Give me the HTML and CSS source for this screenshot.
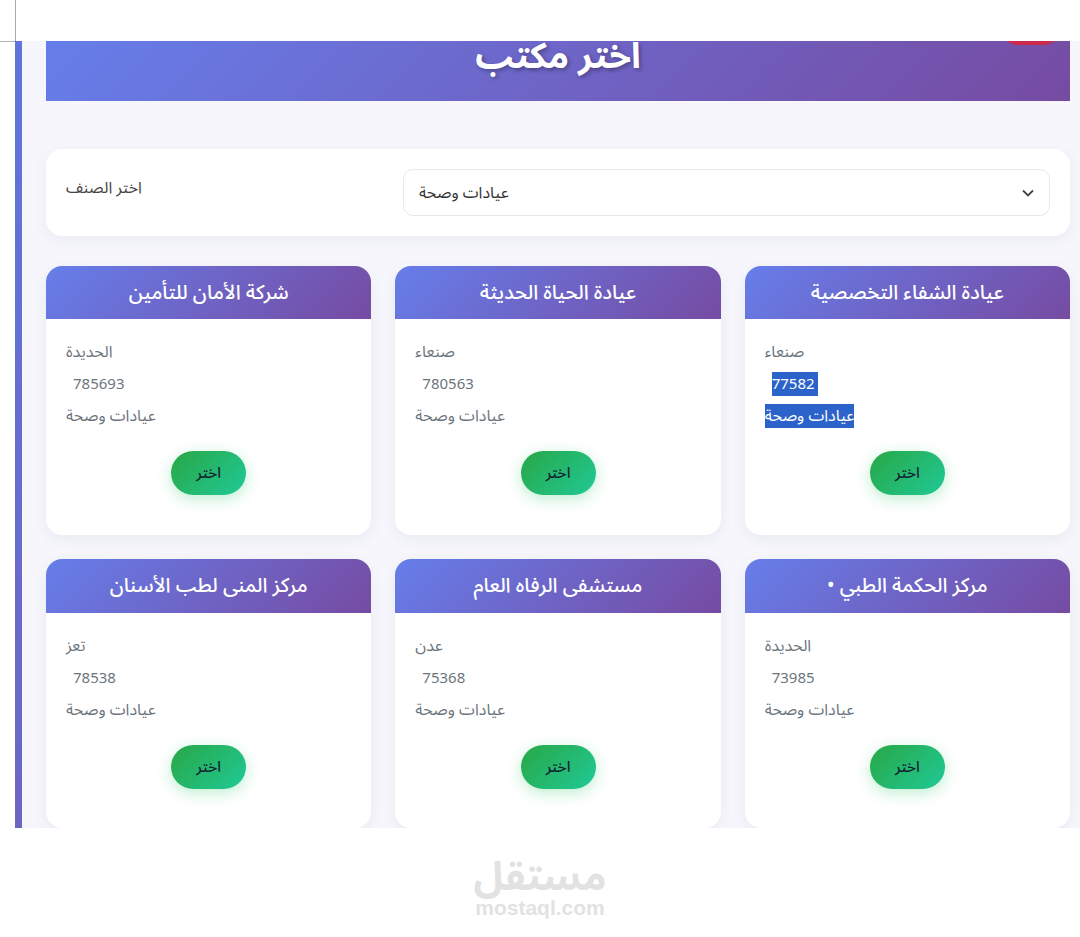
FILE: index.html
```html
<!DOCTYPE html>
<html lang="ar">
<head>
<meta charset="utf-8">
<title>اختر مكتب</title>
<link rel="stylesheet" href="styles.css">
</head>
<body>
<div class="topbar"><div class="corner"></div></div>
<main class="stage">
  <div class="content">
    <header class="hero">
      <h1>اختر مكتب</h1>
      <span class="badge"></span>
    </header>
    <section class="filter">
      <label class="filter-label">اختر الصنف</label>
      <div class="select">
        <span>عيادات وصحة</span>
        <svg class="chev" width="14" height="14" viewBox="0 0 14 14"><path d="M2 4.5 7 9.5 12 4.5" fill="none" stroke="#444" stroke-width="1.8"/></svg>
      </div>
    </section>
    <section class="grid">
      <article class="card">
        <h2>عيادة الشفاء التخصصية</h2>
        <div class="body">
          <p>صنعاء</p>
          <p class="num"><span class="sel">77582&nbsp;</span></p>
          <p><span class="sel">عيادات وصحة</span></p>
          <button class="pick">اختر</button>
        </div>
      </article>
      <article class="card">
        <h2>عيادة الحياة الحديثة</h2>
        <div class="body">
          <p>صنعاء</p>
          <p class="num">780563</p>
          <p>عيادات وصحة</p>
          <button class="pick">اختر</button>
        </div>
      </article>
      <article class="card">
        <h2>شركة الأمان للتأمين</h2>
        <div class="body">
          <p>الحديدة</p>
          <p class="num">785693</p>
          <p>عيادات وصحة</p>
          <button class="pick">اختر</button>
        </div>
      </article>
      <article class="card">
        <h2>مركز الحكمة الطبي •</h2>
        <div class="body">
          <p>الحديدة</p>
          <p class="num">73985</p>
          <p>عيادات وصحة</p>
          <button class="pick">اختر</button>
        </div>
      </article>
      <article class="card">
        <h2>مستشفى الرفاه العام</h2>
        <div class="body">
          <p>عدن</p>
          <p class="num">75368</p>
          <p>عيادات وصحة</p>
          <button class="pick">اختر</button>
        </div>
      </article>
      <article class="card">
        <h2>مركز المنى لطب الأسنان</h2>
        <div class="body">
          <p>تعز</p>
          <p class="num">78538</p>
          <p>عيادات وصحة</p>
          <button class="pick">اختر</button>
        </div>
      </article>
    </section>
  </div>
</main>
<footer class="mark">
  <div class="mark-ar">مستقل</div>
  <div class="mark-en">mostaql.com</div>
</footer>
</body>
</html>
```
FILE: styles.css
```css
* { box-sizing: border-box; }
html, body { margin: 0; padding: 0; }
body {
  width: 1080px;
  height: 937px;
  overflow: hidden;
  background: #fff;
  font-family: "Noto Sans Arabic", "Noto Sans", "DejaVu Sans", sans-serif;
}
.topbar { height: 41px; }
.corner {
  width: 16px;
  height: 42px;
  border-right: 1px solid #a8a8a8;
  border-bottom: 1px solid #b4b4b4;
}
.stage {
  height: 787px;
  margin-left: 15px;
  border-left: 7px solid #6269c8;
  border-image: linear-gradient(180deg, #5f75dc, #6c66c2) 1;
  background: #f6f6fc;
  overflow: hidden;
}
.content { padding: 0 10px 0 24px; }
.hero {
  position: relative;
  height: 60px;
  overflow: hidden;
  background: linear-gradient(135deg, #667eea, #764ba2);
  display: flex;
  justify-content: center;
}
.hero h1 {
  margin: -12px 0 0;
  color: #fff;
  font-size: 35.5px;
  line-height: 56px;
  font-weight: 700;
  text-shadow: 2px 2px 4px rgba(0, 0, 0, .3);
}
.badge {
  position: absolute;
  top: -40px;
  right: 7px;
  width: 64px;
  height: 44px;
  border-radius: 20px;
  background: #cc2a4a;
}
.filter {
  margin-top: 48px;
  height: 87px;
  padding: 20px;
  background: #fff;
  border-radius: 16px;
  box-shadow: 0 4px 14px rgba(90, 90, 140, .07);
  display: flex;
  justify-content: space-between;
  align-items: flex-start;
}
.filter-label {
  font-size: 16px;
  line-height: 38px;
  color: #444;
  direction: rtl;
}
.select {
  width: 647px;
  height: 47px;
  padding: 0 14px 0 15px;
  border: 1.5px solid #e8e8ee;
  border-radius: 10px;
  background: #fff;
  display: flex;
  justify-content: space-between;
  align-items: center;
  font-size: 16px;
  color: #333;
  direction: rtl;
  flex-direction: row-reverse;
}
.grid {
  margin-top: 29.6px;
  direction: rtl;
  display: grid;
  grid-template-columns: repeat(3, 1fr);
  gap: 24.6px 24px;
}
.card {
  height: 269px;
  background: #fff;
  border-radius: 16px;
  overflow: hidden;
  box-shadow: 0 4px 14px rgba(90, 90, 140, .08);
}
.card h2 {
  margin: 0;
  height: 53.5px;
  background: linear-gradient(135deg, #667eea, #764ba2);
  color: #fff;
  font-size: 20px;
  font-weight: 500;
  line-height: 55.5px;
  text-align: center;
}
.body {
  padding: 17px 20px 0;
  display: flex;
  flex-direction: column;
  align-items: flex-end;
}
.body p {
  margin: 0;
  height: 32px;
  font-size: 16px;
  line-height: 32px;
  color: #6c757d;
  align-self: flex-end;
}
.body .num {
  margin-left: 7px;
  font-size: 15px;
  direction: ltr;
}
.sel {
  display: inline-block;
  line-height: 24px;
  background: #2c63cb;
  color: #fff;
}
.pick {
  align-self: center;
  width: 75px;
  height: 44px;
  margin-top: 19px;
  border: 0;
  border-radius: 22px;
  background: linear-gradient(135deg, #28a745, #20c997);
  box-shadow: 0 4px 15px rgba(40, 200, 100, .3);
  color: #123;
  font-family: inherit;
  font-size: 15px;
  font-weight: 500;
}
.mark {
  margin-top: 29px;
  text-align: center;
  color: #e2e2e2;
  font-weight: 700;
}
.mark-ar {
  font-size: 40px;
  line-height: 42px;
  direction: rtl;
}
.mark-en {
  font-family: "Liberation Sans", sans-serif;
  font-size: 21px;
  line-height: 18px;
}
```
